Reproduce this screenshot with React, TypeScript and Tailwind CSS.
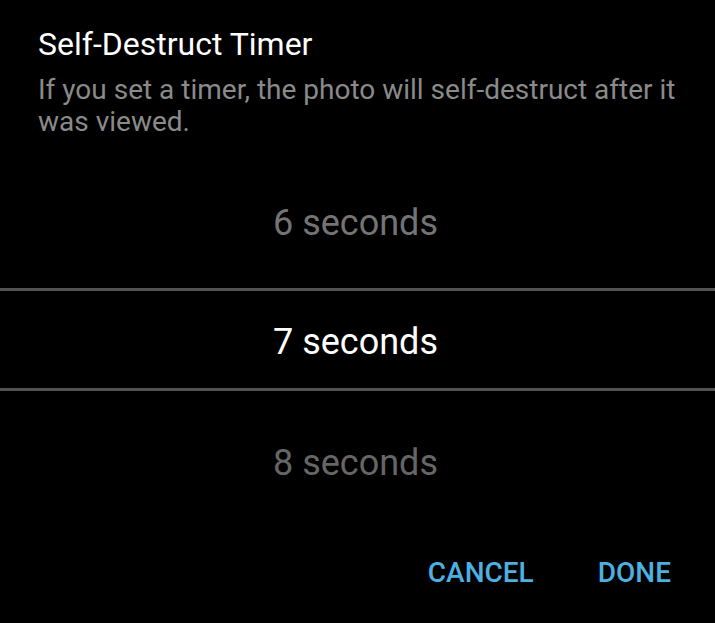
import { useState } from 'react';

const options = [6, 7, 8];

export default function App() {
  const [selected] = useState(7);

  return (
    <div className="w-[715px] h-[623px] bg-black flex flex-col" style={{ fontFamily: 'Roboto, "Noto Sans", sans-serif' }}>
      {/* Header */}
      <div className="pl-[38px] pr-[30px] pt-[26px]">
        <h2 className="text-[32px] leading-[36px] text-white">Self-Destruct Timer</h2>
        <p className="mt-[12px] text-[28px] leading-[32px] text-[#8a8a8a]">
          If you set a timer, the photo will self-destruct after it was viewed.
        </p>
      </div>

      {/* Picker */}
      <div className="flex flex-col pr-[4px]">
        <div className="h-[150px] flex items-end justify-center pb-[45px] text-[36px] leading-[40px] text-[#747474]">
          {options[0]} seconds
        </div>
        <div className="h-[3px] bg-[#525252] -mr-[4px]" />
        <div className="h-[97px] pt-[4px] flex items-center justify-center text-[36px] leading-[40px] text-white">
          {selected} seconds
        </div>
        <div className="h-[3px] bg-[#525252] -mr-[4px]" />
        <div className="h-[110px] pt-[52px] flex justify-center text-[36px] leading-[40px] text-[#666666]">
          {options[2]} seconds
        </div>
      </div>

      {/* Actions */}
      <div className="flex justify-end gap-[64px] pr-[44px] pt-[55px]">
        <button className="text-[28px] leading-[34px] font-medium text-[#4db0e0]">CANCEL</button>
        <button className="text-[28px] leading-[34px] font-medium text-[#4db0e0]">DONE</button>
      </div>
    </div>
  );
}
